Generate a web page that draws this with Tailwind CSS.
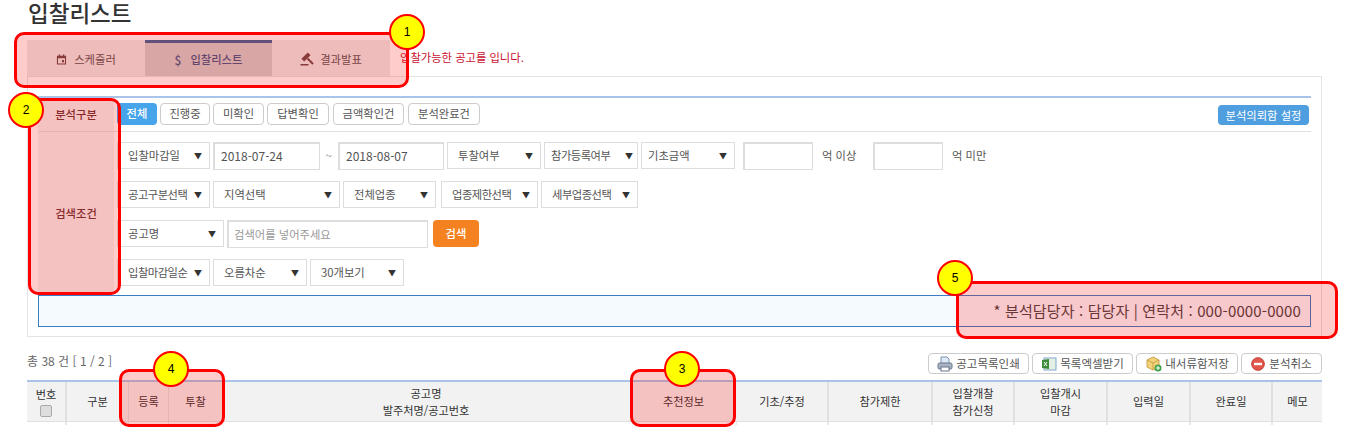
<!DOCTYPE html>
<html lang="ko">
  <head>
    <meta charset="UTF-8">
    <title>입찰리스트</title>
    <script src="https://cdn.jsdelivr.net/npm/@tailwindcss/browser@4"></script>
  </head>
  <body class="bg-white text-[#444] font-['Noto_Sans_CJK_KR','Liberation_Sans',sans-serif] text-[11.3px]">
    <div class="relative w-[1348px] h-[439px] overflow-hidden">
      <!-- title -->
      <h1 class="h-[40px] pl-[28px] text-[22.5px] leading-[25px] font-medium text-[#333]">입찰리스트</h1>

      <!-- tabs -->
      <div class="flex h-[36px] pl-[27px]">
        <div class="w-[118px] bg-[#ebebeb] pt-[2px] flex items-center justify-center gap-[7px] text-[#555]">
          <svg class="w-[11px] h-[11px]" viewBox="0 0 12 12" fill="#6b4a4a"><path d="M1 2h2V0.5h1.500V2h3V0.5H9V2h2v9.500H1zM2.200 4.500v5.800h7.600V4.500zM6.500 6.500h2.300v2.500H6.500z" fill-rule="evenodd"/></svg>
          <span>스케줄러</span>
        </div>
        <div class="w-[127px] bg-[#d0d0d0] border-t-[3px] border-[#3a6499] flex items-center justify-center gap-[9px] text-[#3f5a8a] font-medium">
          <span class="text-[12px]">$</span>
          <span>입찰리스트</span>
        </div>
        <div class="w-[118px] bg-[#ebebeb] pt-[2px] flex items-center justify-center gap-[6px] text-[#555]">
          <svg class="w-[14px] h-[14px]" viewBox="0 0 14 14" fill="#6b4a4a"><path d="M7.800 0.400L10.600 3.200 4.200 9.600 1.400 6.800z"/><path d="M7.500 6.500L13 12" stroke="#6b4a4a" stroke-width="2"/><rect x="0.500" y="12" width="8" height="1.500"/></svg>
          <span>결과발표</span>
        </div>
        <p class="ml-[10px] pt-[9px] text-[#c8102e]">입찰가능한 공고를 입니다.</p>
      </div>

      <!-- search panel -->
      <div class="ml-[27px] w-[1295px] h-[261px] border border-[#e4e4e4] px-[10px] pt-[19px]">
        <div class="border-t-2 border-[#a9c4e8]">
          <div class="flex h-[34px] border-b border-[#e0e0e0]">
            <div class="w-[76px] bg-[#f2f2f2] flex items-center justify-center font-medium text-[#6a3535]">분석구분</div>
            <div class="flex-1 flex items-center gap-[3px] pl-[3px] pb-[2px] text-[#555]">
              <span class="w-[40px] h-[22px] rounded-sm bg-[#45a4ea] text-white font-medium flex items-center justify-center">전체</span>
              <span class="w-[50px] h-[22px] rounded-sm border border-[#ccc] flex items-center justify-center">진행중</span>
              <span class="w-[51px] h-[22px] rounded-sm border border-[#ccc] flex items-center justify-center">미확인</span>
              <span class="w-[62px] h-[22px] rounded-sm border border-[#ccc] flex items-center justify-center">답변확인</span>
              <span class="ml-[1px] w-[71px] h-[22px] rounded-sm border border-[#ccc] flex items-center justify-center">금액확인건</span>
              <span class="ml-[1px] w-[72px] h-[22px] rounded-sm border border-[#ccc] flex items-center justify-center">분석완료건</span>
              <span class="ml-auto mr-[2px] mt-[3px] w-[91px] h-[20px] rounded-sm bg-[#4f9fe0] text-white flex items-center justify-center">분석의뢰함 설정</span>
            </div>
          </div>
          <div class="flex h-[163px]">
            <div class="w-[76px] bg-[#f2f2f2] flex items-center justify-center font-medium text-[#6a3535]">검색조건</div>
            <div class="flex-1 pl-[3px] pt-[10px] text-[#555] flex flex-col gap-[12px]">
              <div class="flex items-center h-[27px] gap-[3px]">
                <div class="w-[93px] h-[27px] border border-[#ddd] pl-[10px] pr-[7px] flex items-center justify-between"><span>입찰마감일</span><i class="text-[8px] not-italic text-[#333]">▼</i></div>
                <div class="w-[107px] h-[28px] border border-[#ddd] border-t-2 border-l-2 pl-[6px] flex items-center text-[12px]">2018-07-24</div>
                <span class="w-[12px] text-center text-[#888]">~</span>
                <div class="w-[106px] h-[28px] border border-[#ddd] border-t-2 border-l-2 pl-[6px] flex items-center text-[12px]">2018-08-07</div>
                <div class="w-[94px] h-[27px] border border-[#ddd] pl-[10px] pr-[7px] flex items-center justify-between"><span>투찰여부</span><i class="text-[8px] not-italic text-[#333]">▼</i></div>
                <div class="w-[94px] h-[27px] border border-[#ddd] pl-[6px] pr-[4px] flex items-center justify-between"><span class="tracking-[-0.5px]">참가등록여부</span><i class="text-[8px] not-italic text-[#333]">▼</i></div>
                <div class="w-[94px] h-[27px] border border-[#ddd] pl-[6px] pr-[7px] flex items-center justify-between"><span>기초금액</span><i class="text-[8px] not-italic text-[#333]">▼</i></div>
                <div class="ml-[5px] w-[70px] h-[28px] border border-[#ddd] border-t-2 border-l-2"></div>
                <span class="ml-[6px] w-[48px]">억 이상</span>
                <div class="w-[70px] h-[28px] border border-[#ddd] border-t-2 border-l-2"></div>
                <span class="ml-[6px]">억 미만</span>
              </div>
              <div class="flex items-center h-[27px] gap-[3px]">
                <div class="w-[93px] h-[27px] border border-[#ddd] pl-[10px] pr-[7px] flex items-center justify-between"><span class="tracking-[-0.5px]">공고구분선택</span><i class="text-[8px] not-italic text-[#333]">▼</i></div>
                <div class="w-[127px] h-[27px] border border-[#ddd] pl-[10px] pr-[7px] flex items-center justify-between"><span>지역선택</span><i class="text-[8px] not-italic text-[#333]">▼</i></div>
                <div class="w-[93px] h-[27px] border border-[#ddd] pl-[10px] pr-[7px] flex items-center justify-between"><span>전체업종</span><i class="text-[8px] not-italic text-[#333]">▼</i></div>
                <div class="ml-[2px] w-[97px] h-[27px] border border-[#ddd] pl-[10px] pr-[7px] flex items-center justify-between"><span class="tracking-[-0.5px]">업종제한선택</span><i class="text-[8px] not-italic text-[#333]">▼</i></div>
                <div class="w-[97px] h-[27px] border border-[#ddd] pl-[10px] pr-[7px] flex items-center justify-between"><span class="tracking-[-0.5px]">세부업종선택</span><i class="text-[8px] not-italic text-[#333]">▼</i></div>
              </div>
              <div class="flex items-center h-[27px] gap-[3px]">
                <div class="w-[107px] h-[27px] border border-[#ddd] pl-[10px] pr-[7px] flex items-center justify-between"><span>공고명</span><i class="text-[8px] not-italic text-[#333]">▼</i></div>
                <input class="w-[201px] h-[28px] border border-[#ddd] border-t-2 border-l-2 pl-[5px] placeholder:text-[#999]" placeholder="검색어를 넣어주세요">
                <span class="ml-[2px] w-[46px] h-[27px] rounded-sm bg-[#f58220] text-white font-medium flex items-center justify-center">검색</span>
              </div>
              <div class="flex items-center h-[27px] gap-[3px]">
                <div class="w-[93px] h-[27px] border border-[#ddd] pl-[10px] pr-[7px] flex items-center justify-between"><span class="tracking-[-0.5px]">입찰마감일순</span><i class="text-[8px] not-italic text-[#333]">▼</i></div>
                <div class="w-[94px] h-[27px] border border-[#ddd] pl-[10px] pr-[7px] flex items-center justify-between"><span>오름차순</span><i class="text-[8px] not-italic text-[#333]">▼</i></div>
                <div class="w-[94px] h-[27px] border border-[#ddd] pl-[10px] pr-[7px] flex items-center justify-between"><span>30개보기</span><i class="text-[8px] not-italic text-[#333]">▼</i></div>
              </div>
            </div>
          </div>
          <div class="h-[32px] border border-[#3a7dc0] bg-[#f5faff] flex items-center justify-end pr-[9px] text-[15px] tracking-[0.14px] text-[#444]">* 분석담당자 : 담당자 | 연락처 : 000-0000-0000</div>
        </div>
      </div>

      <!-- list toolbar -->
      <div class="ml-[27px] w-[1295px] h-[43px] flex items-start justify-between pt-[16px] text-[#555]">
        <span class="text-[12px] text-[#666] mt-[-1px]">총 38 건 [ 1 / 2 ]</span>
        <div class="flex gap-[3px] text-[#555] text-[11.500px]">
          <span class="w-[101px] h-[21px] rounded-sm border border-[#ccc] flex items-center justify-center gap-[3px]">
            <svg class="w-[16px] h-[16px]" viewBox="0 0 16 16"><path d="M4 1h6l2 2v5H4z" fill="#dfe9f5" stroke="#7d94b5"/><rect x="1" y="7" width="14" height="6" rx="1.500" fill="#a9b3c2" stroke="#67748a"/><rect x="4" y="11" width="8" height="4" fill="#fff" stroke="#67748a"/></svg>
            <span>공고목록인쇄</span>
          </span>
          <span class="w-[101px] h-[21px] rounded-sm border border-[#ccc] flex items-center justify-center gap-[3px]">
            <svg class="w-[16px] h-[16px]" viewBox="0 0 16 16"><rect x="3" y="2" width="12" height="12" fill="#e4f0e4" stroke="#7fa8c9"/><path d="M1 4l7-1v10l-7-1z" fill="#3c8a3c"/><path d="M3 6l3 4M6 6l-3 4" stroke="#fff"/></svg>
            <span>목록엑셀받기</span>
          </span>
          <span class="w-[102px] h-[21px] rounded-sm border border-[#ccc] flex items-center justify-center gap-[3px]">
            <svg class="w-[17px] h-[16px]" viewBox="0 0 17 16"><path d="M8 1l6 3v7l-6 3-6-3V4z" fill="#f3d27a" stroke="#c9a24a"/><path d="M2 4l6 3 6-3M8 7v7" fill="none" stroke="#c9a24a"/><circle cx="13" cy="12" r="3.500" fill="#3fa34d"/><path d="M11 12h4M13 10v4" stroke="#fff"/></svg>
            <span>내서류함저장</span>
          </span>
          <span class="w-[81px] h-[21px] rounded-sm border border-[#ccc] flex items-center justify-center gap-[4px]">
            <svg class="w-[14px] h-[14px]" viewBox="0 0 14 14"><circle cx="7" cy="7" r="6.300" fill="#e2574c" stroke="#c0392b"/><rect x="3" y="5.800" width="8" height="2.400" fill="#fff"/></svg>
            <span>분석취소</span>
          </span>
        </div>
      </div>

      <!-- list header -->
      <div class="ml-[27px] w-[1295px] grid grid-cols-[40px_62px_40px_53px_408px_107px_92px_104px_82px_93px_83px_82px_49px] border-t-2 border-[#a9c4e8] text-[#333] text-center text-[11.200px]">
        <div class="h-[40px] bg-[#f2f2f2] border-b border-r-2 border-[#e0e0e0] flex flex-col items-center justify-center leading-[17px]">
          <span>번호</span>
          <input type="checkbox" class="appearance-none w-[12px] h-[12px] mt-[2px] rounded-[2px] border border-[#aaa] bg-[#ddd]">
        </div>
        <div class="h-[40px] bg-[#f2f2f2] border-b border-r border-[#e0e0e0] flex items-center justify-center">구분</div>
        <div class="h-[40px] bg-[#f2f2f2] border-b border-r border-[#e0e0e0] flex items-center justify-center">등록</div>
        <div class="h-[40px] bg-[#f2f2f2] border-b border-[#e0e0e0] flex items-center justify-center">투찰</div>
        <div class="h-[40px] bg-[#f2f2f2] border-b border-[#e0e0e0] flex flex-col items-center justify-center leading-[17px]"><span>공고명</span><span>발주처명/공고번호</span></div>
        <div class="h-[40px] bg-[#f2f2f2] border-b border-[#e0e0e0] flex items-center justify-center">추천정보</div>
        <div class="h-[40px] bg-[#f2f2f2] border-b border-r-2 border-[#e0e0e0] flex items-center justify-center">기초/추정</div>
        <div class="h-[40px] bg-[#f2f2f2] border-b border-r-2 border-[#e0e0e0] flex items-center justify-center">참가제한</div>
        <div class="h-[40px] bg-[#f2f2f2] border-b border-r-2 border-[#e0e0e0] flex flex-col items-center justify-center leading-[17px]"><span>입찰개찰</span><span>참가신청</span></div>
        <div class="h-[40px] bg-[#f2f2f2] border-b border-r-2 border-[#e0e0e0] flex flex-col items-center justify-center leading-[17px]"><span>입찰개시</span><span>마감</span></div>
        <div class="h-[40px] bg-[#f2f2f2] border-b border-r-2 border-[#e0e0e0] flex items-center justify-center">입력일</div>
        <div class="h-[40px] bg-[#f2f2f2] border-b border-r-2 border-[#e0e0e0] flex items-center justify-center">완료일</div>
        <div class="h-[40px] bg-[#f2f2f2] border-b border-[#e0e0e0] flex items-center justify-center">메모</div>
        <!-- top of the first row, cut off by the window -->
        <div class="h-[3px] border-r-2 border-[#e8e8e8]"></div>
        <div class="h-[3px] border-r border-[#e8e8e8]"></div>
        <div class="h-[3px] border-r border-[#e8e8e8]"></div>
        <div class="h-[3px]"></div>
        <div class="h-[3px]"></div>
        <div class="h-[3px] border-r border-[#e8e8e8]"></div>
        <div class="h-[3px] border-r-2 border-[#e8e8e8]"></div>
        <div class="h-[3px] border-r-2 border-[#e8e8e8]"></div>
        <div class="h-[3px] border-r-2 border-[#e8e8e8]"></div>
        <div class="h-[3px] border-r-2 border-[#e8e8e8]"></div>
        <div class="h-[3px] border-r-2 border-[#e8e8e8]"></div>
        <div class="h-[3px] border-r-2 border-[#e8e8e8]"></div>
        <div class="h-[3px]"></div>
      </div>

      <!-- annotation overlays -->
      <div class="absolute left-[14px] top-[32px] w-[395px] h-[56px] rounded-[10px] border-[3px] border-[#ff0000] bg-[#ff0000]/20"></div>
      <div class="absolute left-[28px] top-[98px] w-[93px] h-[197px] rounded-[10px] border-[3px] border-[#ff0000] bg-[#ff0000]/20"></div>
      <div class="absolute left-[630px] top-[369px] w-[106px] h-[58px] rounded-[10px] border-[3px] border-[#ff0000] bg-[#ff0000]/20"></div>
      <div class="absolute left-[119px] top-[369px] w-[106px] h-[58px] rounded-[10px] border-[3px] border-[#ff0000] bg-[#ff0000]/20"></div>
      <div class="absolute left-[956px] top-[281px] w-[382px] h-[58px] rounded-[10px] border-[3px] border-[#ff0000] bg-[#ff0000]/20"></div>

      <div class="absolute left-[389px] top-[14px] w-[36px] h-[36px] rounded-full border-2 border-[#ff0000] bg-[#ffff00] text-black text-[12px] font-['Liberation_Sans'] flex items-center justify-center">1</div>
      <div class="absolute left-[8px] top-[92px] w-[36px] h-[36px] rounded-full border-2 border-[#ff0000] bg-[#ffff00] text-black text-[12px] font-['Liberation_Sans'] flex items-center justify-center">2</div>
      <div class="absolute left-[664px] top-[351px] w-[36px] h-[36px] rounded-full border-2 border-[#ff0000] bg-[#ffff00] text-black text-[12px] font-['Liberation_Sans'] flex items-center justify-center">3</div>
      <div class="absolute left-[153px] top-[351px] w-[36px] h-[36px] rounded-full border-2 border-[#ff0000] bg-[#ffff00] text-black text-[12px] font-['Liberation_Sans'] flex items-center justify-center">4</div>
      <div class="absolute left-[937px] top-[260px] w-[36px] h-[36px] rounded-full border-2 border-[#ff0000] bg-[#ffff00] text-black text-[12px] font-['Liberation_Sans'] flex items-center justify-center">5</div>
    </div>
  </body>
</html>
